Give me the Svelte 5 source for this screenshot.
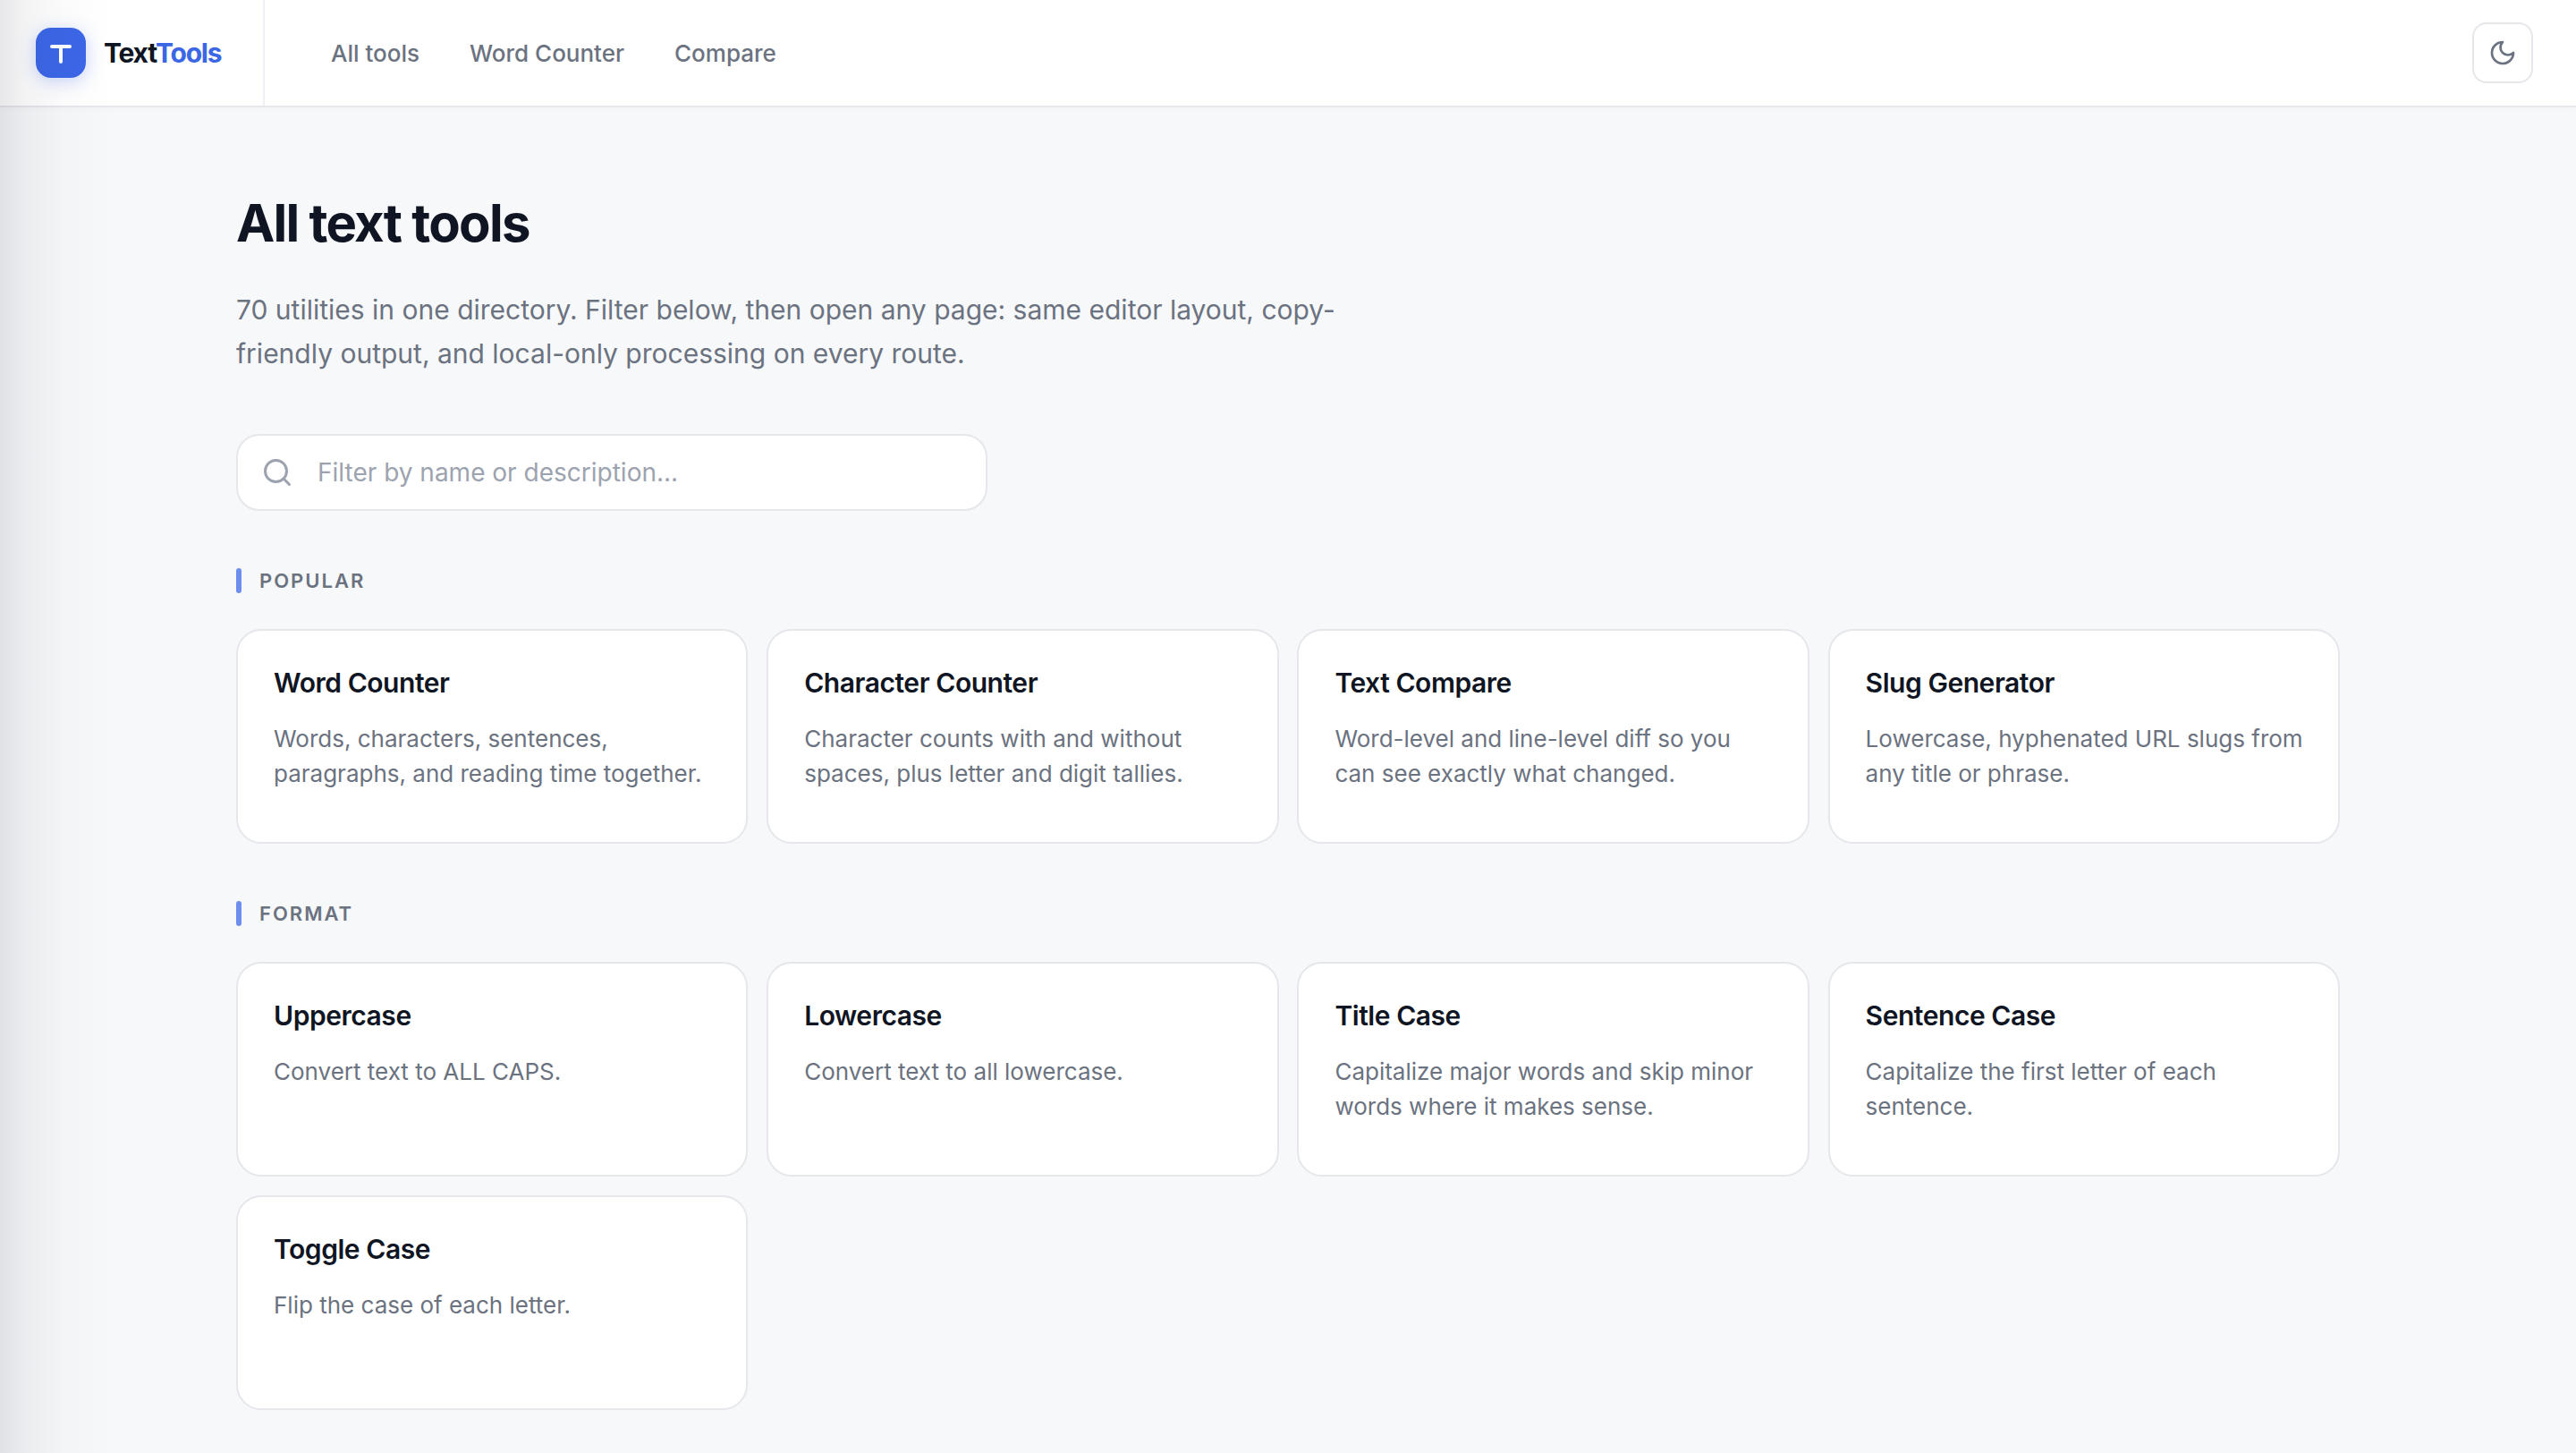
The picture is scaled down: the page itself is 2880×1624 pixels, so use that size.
<script>
  const sections = [
    { name: 'Popular', tools: [
      ['Word Counter', 'Words, characters, sentences, paragraphs, and reading time together.'],
      ['Character Counter', 'Character counts with and without spaces, plus letter and digit tallies.'],
      ['Text Compare', 'Word-level and line-level diff so you can see exactly what changed.'],
      ['Slug Generator', 'Lowercase, hyphenated URL slugs from any title or phrase.']
    ]},
    { name: 'Format', tools: [
      ['Uppercase', 'Convert text to ALL CAPS.'],
      ['Lowercase', 'Convert text to all lowercase.'],
      ['Title Case', 'Capitalize major words and skip minor words where it makes sense.'],
      ['Sentence Case', 'Capitalize the first letter of each sentence.'],
      ['Toggle Case', 'Flip the case of each letter.']
    ]}
  ];
</script>

<div class="page">
  <header class="topbar">
    <a class="brand" href="#top">
      <span class="logo">
        <svg viewBox="0 0 56 56" width="56" height="56" fill="none" stroke="#fff" stroke-width="4" stroke-linecap="round"><path d="M18 21h20M28 21v17"/></svg>
      </span>
      <span class="brand-name">Text<span class="accent">Tools</span></span>
    </a>
    <nav class="nav">
      <a href="#all">All tools</a>
      <a href="#wc">Word Counter</a>
      <a href="#cmp">Compare</a>
    </nav>
    <button class="theme" aria-label="Toggle theme">
      <svg viewBox="0 0 24 24" width="32" height="32" fill="none" stroke="currentColor" stroke-width="2" stroke-linecap="round" stroke-linejoin="round"><path d="M12 3a6 6 0 0 0 9 9 9 9 0 1 1-9-9Z"/></svg>
    </button>
  </header>

  <main class="main">
    <h1>All text tools</h1>
    <p class="lead">70 utilities in one directory. Filter below, then open any page: same editor layout, copy-friendly output, and local-only processing on every route.</p>

    <label class="search">
      <svg viewBox="0 0 24 24" width="36" height="36" fill="none" stroke="currentColor" stroke-width="2" stroke-linecap="round" stroke-linejoin="round"><circle cx="11" cy="11" r="8"/><path d="m21 21-4.3-4.3"/></svg>
      <input type="text" placeholder="Filter by name or description..." />
    </label>

    {#each sections as s}
      <section class="section">
        <h2>{s.name}</h2>
        <div class="grid">
          {#each s.tools as t}
            <a class="card" href="#tool">
              <h3>{t[0]}</h3>
              <p>{t[1]}</p>
            </a>
          {/each}
        </div>
      </section>
    {/each}
  </main>
  <div class="edge"></div>
</div>

<style>
  :global(body) {
    margin: 0;
    background: #f7f8fa;
    font-family: Inter, "Liberation Sans", sans-serif;
  }
  .page {
    position: relative;
    min-height: 1624px;
    overflow: hidden;
    background: #f7f8fa;
  }
  .edge {
    position: absolute;
    inset: 0 auto 0 0;
    width: 130px;
    pointer-events: none;
    background: linear-gradient(90deg, rgba(20, 24, 40, 0.1) 0%, rgba(20, 24, 40, 0.05) 22%, rgba(20, 24, 40, 0.015) 55%, rgba(20, 24, 40, 0) 100%);
  }
  .topbar {
    display: flex;
    align-items: stretch;
    height: 118px;
    background: #fff;
    border-bottom: 2px solid #e5e7eb;
    box-shadow: 0 2px 6px rgba(15, 21, 34, 0.025);
    padding-right: 48px;
  }
  .brand {
    display: flex;
    align-items: center;
    gap: 20px;
    width: 254px;
    padding-left: 40px;
    border-right: 2px solid #eef0f3;
    text-decoration: none;
  }
  .logo {
    width: 56px;
    height: 56px;
    flex: none;
    border-radius: 17px;
    background: #3b66e6;
    box-shadow: 0 4px 20px rgba(59, 102, 230, 0.28);
    display: block;
  }
  .logo svg { display: block; }
  .brand-name {
    font-size: 30px;
    font-weight: 700;
    letter-spacing: -1.2px;
    color: #0f1522;
  }
  .accent { color: #3b66e6; }
  .nav {
    display: flex;
    align-items: center;
    gap: 56px;
    margin-left: 74px;
  }
  .nav a {
    font-size: 26px;
    font-weight: 500;
    color: #6b7280;
    text-decoration: none;
  }
  .theme {
    margin: auto 0 auto auto;
    width: 68px;
    height: 68px;
    padding: 0;
    display: grid;
    place-items: center;
    border: 2px solid #e5e7eb;
    border-radius: 16px;
    background: #fff;
    color: #6b7280;
  }
  .theme svg { display: block; }
  .main {
    padding: 94px 264px 0;
  }
  h1 {
    margin: 0;
    font-size: 58px;
    line-height: 70px;
    font-weight: 700;
    letter-spacing: -1.74px;
    color: #0f1522;
  }
  .lead {
    margin: 38px 0 0;
    max-width: 1280px;
    font-size: 30px;
    line-height: 49px;
    color: #6b7280;
  }
  .search {
    display: flex;
    align-items: center;
    gap: 27px;
    box-sizing: border-box;
    width: 840px;
    height: 86px;
    margin-top: 65px;
    padding-left: 26px;
    background: #fff;
    border: 2px solid #e5e7eb;
    border-radius: 26px;
    color: #9ca3af;
  }
  .search svg { flex: none; }
  .search input {
    flex: 1;
    min-width: 0;
    border: 0;
    outline: 0;
    padding: 0;
    background: transparent;
    font: 400 28px Inter, "Liberation Sans", sans-serif;
    color: #0f1522;
  }
  .search input::placeholder { color: #9ca3af; opacity: 1; }
  .section { margin-top: 64px; }
  h2 {
    position: relative;
    margin: 0 0 40px;
    padding-left: 26px;
    font-size: 22px;
    line-height: 28px;
    font-weight: 600;
    letter-spacing: 2px;
    text-transform: uppercase;
    color: #6b7280;
  }
  h2::before {
    content: "";
    position: absolute;
    left: 0;
    top: 0;
    width: 6px;
    height: 28px;
    border-radius: 3px;
    background: #6e8eee;
  }
  .grid {
    display: grid;
    grid-template-columns: repeat(4, 1fr);
    gap: 20.8px;
  }
  .card {
    box-sizing: border-box;
    height: 240px;
    padding: 39px 36px 40px 40px;
    background: #fff;
    border: 2px solid #e5e7eb;
    border-radius: 28px;
    text-decoration: none;
  }
  h3 {
    margin: 0;
    font-size: 30px;
    line-height: 38px;
    font-weight: 600;
    letter-spacing: -0.45px;
    color: #0f1522;
  }
  .card p {
    margin: 24px 0 0;
    font-size: 26px;
    line-height: 39px;
    color: #6b7280;
  }
</style>
